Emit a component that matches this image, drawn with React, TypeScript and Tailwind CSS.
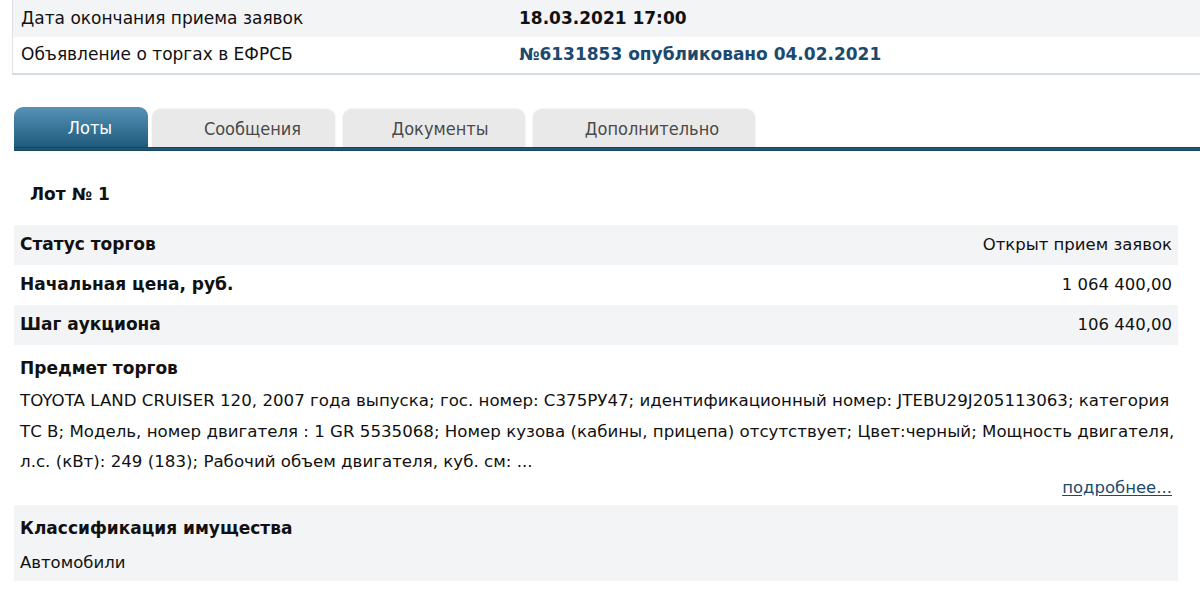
import React from "react";

const font = { fontFamily: '"DejaVu Sans", Verdana, sans-serif' };

export default function App() {
  return (
    <div className="w-[1200px] h-[593px] bg-white overflow-hidden text-[#111]" style={font}>
      {/* top table */}
      <div className="ml-[12px] border-l border-[#dfe3e8] border-b-2 border-b-[#d3dbe3]">
        <div className="flex items-center h-[37px] bg-[#f3f4f6] text-[17px]">
          <div className="w-[506px] pl-[8px]">Дата окончания приема заявок</div>
          <div className="font-bold">18.03.2021 17:00</div>
        </div>
        <div className="flex items-center h-[36px] bg-white text-[17px]">
          <div className="w-[506px] pl-[8px]">Объявление о торгах в ЕФРСБ</div>
          <div className="font-bold text-[#1b4a6e]">№6131853 опубликовано 04.02.2021</div>
        </div>
      </div>

      {/* tabs */}
      <div className="mt-[32px]">
        <div className="flex items-end h-[40px] pl-[14px] gap-[4px]" style={{ fontFamily: '"DejaVu Sans Condensed", "Liberation Sans Narrow", sans-serif' }}>
          <div className="w-[134px] h-[40px] pl-[18px] rounded-t-[9px] bg-gradient-to-b from-[#5693b8] to-[#1f5b7d] text-white flex items-center justify-center text-[18px]">Лоты</div>
          <div className="w-[183px] h-[38px] pl-[18px] rounded-t-[9px] bg-[#e9e9e9] shadow-[0_0_2px_rgba(0,0,0,0.12)] text-[#4a4a4a] flex items-center justify-center text-[18px]">Сообщения</div>
          <div className="w-[182px] h-[38px] pl-[12px] rounded-t-[9px] bg-[#e9e9e9] shadow-[0_0_2px_rgba(0,0,0,0.12)] text-[#4a4a4a] flex items-center justify-center text-[18px] ml-[4px]">Документы</div>
          <div className="w-[222px] h-[38px] pl-[16px] rounded-t-[9px] bg-[#e9e9e9] shadow-[0_0_2px_rgba(0,0,0,0.12)] text-[#4a4a4a] flex items-center justify-center text-[18px] ml-[4px]">Дополнительно</div>
        </div>
        <div className="ml-[14px] h-[4px] bg-[#1e5674] border-y border-[#164661]" />
      </div>

      {/* lot */}
      <div className="pl-[30px] pt-[31px] h-[74px] font-bold text-[17px]">Лот № 1</div>

      <div className="ml-[14px] w-[1164px] text-[16.5px]">
        <div className="flex items-center justify-between h-[40px] bg-[#f3f4f6] px-[6px]">
          <div className="font-bold text-[17px]">Статус торгов</div>
          <div>Открыт прием заявок</div>
        </div>
        <div className="flex items-center justify-between h-[40px] bg-white px-[6px]">
          <div className="font-bold text-[17px]">Начальная цена, руб.</div>
          <div>1 064 400,00</div>
        </div>
        <div className="flex items-center justify-between h-[40px] bg-[#f3f4f6] px-[6px]">
          <div className="font-bold text-[17px]">Шаг аукциона</div>
          <div>106 440,00</div>
        </div>
        <div className="bg-white px-[6px] pt-[9px] h-[160px]">
          <div className="font-bold text-[17px] leading-[28px]">Предмет торгов</div>
          <div className="leading-[30.5px] mt-[4px] whitespace-nowrap text-[16.65px]">
            <div>TOYOTA LAND CRUISER 120, 2007 года выпуска; гос. номер: С375РУ47; идентификационный номер: JTEBU29J205113063; категория</div>
            <div>ТС В; Модель, номер двигателя : 1 GR 5535068; Номер кузова (кабины, прицепа) отсутствует; Цвет:черный; Мощность двигателя,</div>
            <div>л.с. (кВт): 249 (183); Рабочий объем двигателя, куб. см: ...</div>
          </div>
          <div className="text-right leading-[24px] -mt-[2px]">
            <span className="text-[#1b4a6e] underline underline-offset-[2px]">подробнее...</span>
          </div>
        </div>
        <div className="bg-[#f3f4f6] px-[6px] pt-[10px] h-[76px]">
          <div className="font-bold text-[17px] leading-[26px]">Классификация имущества</div>
          <div className="leading-[26px] mt-[9px]">Автомобили</div>
        </div>
      </div>
    </div>
  );
}
